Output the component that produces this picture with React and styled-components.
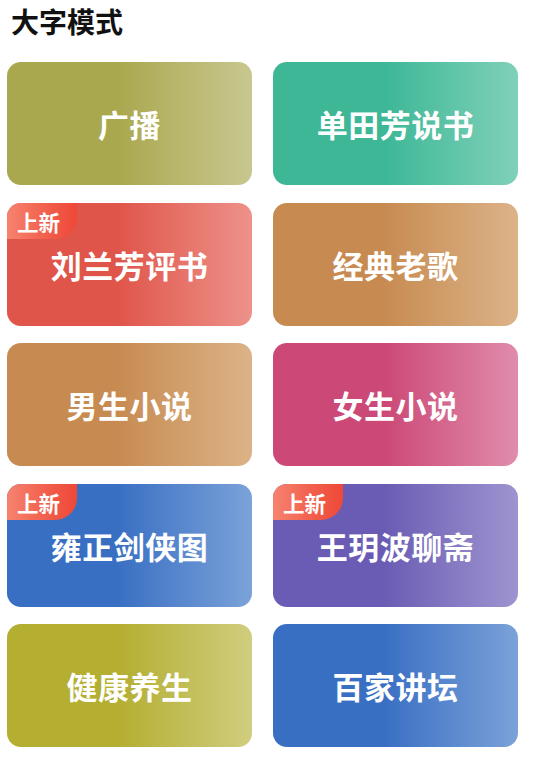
import styled, { createGlobalStyle } from 'styled-components'

const GlobalStyle = createGlobalStyle`
  html, body {
    margin: 0;
    padding: 0;
    background: #fff;
  }
  body {
    font-family: 'Noto Sans CJK SC', 'Noto Sans', sans-serif;
  }
`

const Page = styled.div`
  width: 534px;
  box-sizing: border-box;
  padding: 3px 15px 0 7px;
`

const Title = styled.h1`
  margin: 0 0 23px 4px;
  font-size: 28px;
  line-height: 36px;
  font-weight: 700;
  color: #111;
`

const Grid = styled.div`
  display: grid;
  grid-template-columns: 245px 245px;
  grid-auto-rows: 123px;
  column-gap: 21px;
  row-gap: 17.5px;
`

const Card = styled.div`
  position: relative;
  border-radius: 14px;
  overflow: hidden;
  display: flex;
  align-items: center;
  justify-content: center;
  background: linear-gradient(
    90deg,
    ${({ $from }) => $from} 0%,
    ${({ $from }) => $from} 45%,
    ${({ $to }) => $to} 100%
  );
`

const Label = styled.span`
  color: #fff;
  font-size: 31px;
  font-weight: 700;
  letter-spacing: 0.5px;
  line-height: 1;
`

const Badge = styled.span`
  position: absolute;
  top: 0;
  left: 0;
  width: 70px;
  height: 36px;
  box-sizing: border-box;
  padding: 2px 0 0 10px;
  display: flex;
  align-items: center;
  border-bottom-right-radius: 22px;
  background: linear-gradient(90deg, #f6836f 0%, #f15d4a 60%, #ef4838 100%);
  color: #fff;
  font-size: 21.5px;
  font-weight: 700;
  line-height: 1;
`

const items = [
  { name: '广播', from: '#aaa84e', to: '#c8c790' },
  { name: '单田芳说书', from: '#3db796', to: '#7fd1b9' },
  { name: '刘兰芳评书', from: '#e0554a', to: '#ed928a', isNew: true },
  { name: '经典老歌', from: '#c78b51', to: '#dcb388' },
  { name: '男生小说', from: '#c78b51', to: '#dcb388' },
  { name: '女生小说', from: '#cc4876', to: '#e08cac' },
  { name: '雍正剑侠图', from: '#396fc3', to: '#7ba2d9', isNew: true },
  { name: '王玥波聊斋', from: '#6a5cb4', to: '#9e94d0', isNew: true },
  { name: '健康养生', from: '#b4ae31', to: '#d0cd7e' },
  { name: '百家讲坛', from: '#396fc3', to: '#7ba2d9' }
]

export default function App() {
  return (
    <>
      <GlobalStyle />
      <Page>
        <Title>大字模式</Title>
        <Grid>
          {items.map((item) => (
            <Card key={item.name} $from={item.from} $to={item.to}>
              {item.isNew && <Badge>上新</Badge>}
              <Label>{item.name}</Label>
            </Card>
          ))}
        </Grid>
      </Page>
    </>
  )
}
